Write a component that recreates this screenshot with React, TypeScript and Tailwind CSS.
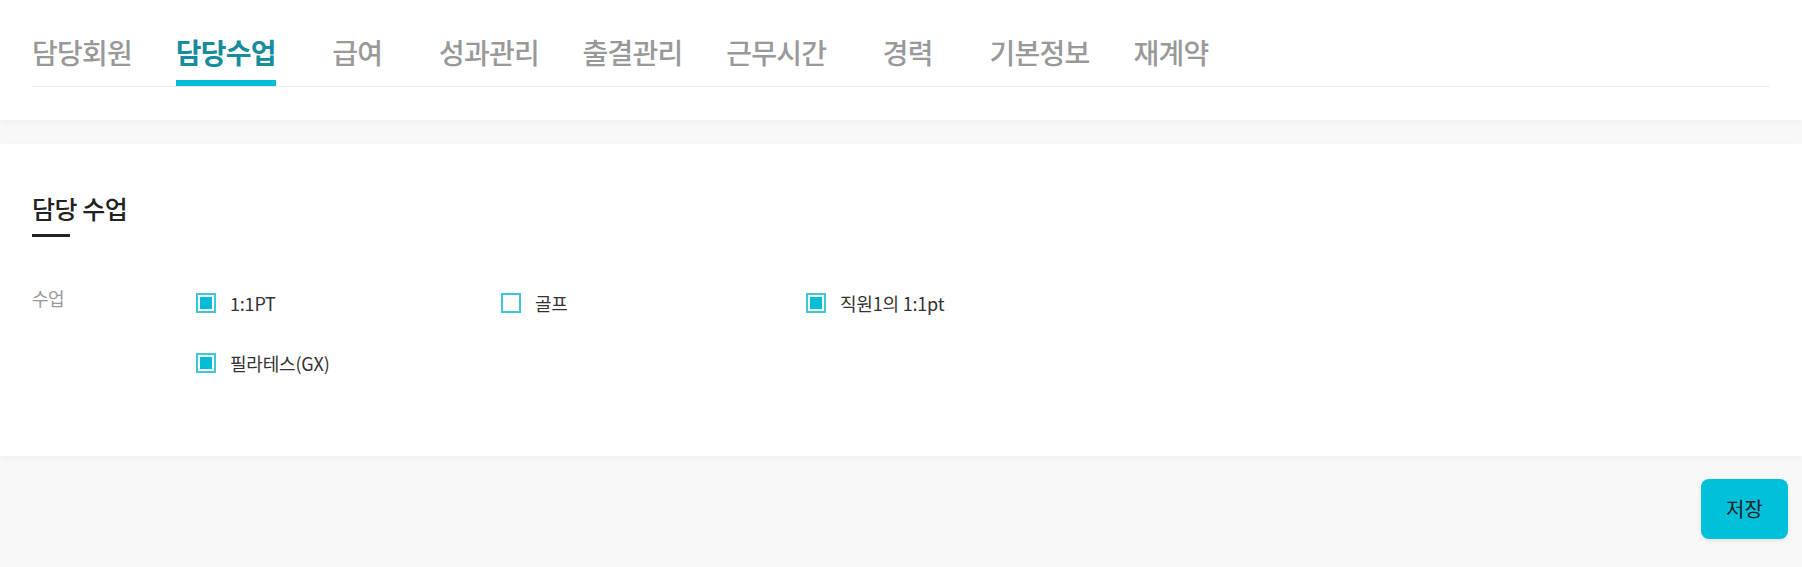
import React from "react";

const tabs = ["담당회원", "담당수업", "급여", "성과관리", "출결관리", "근무시간", "경력", "기본정보", "재계약"];

function Check({ checked, label }: { checked: boolean; label: string }) {
  return (
    <div className="flex items-center w-[305px] h-[20px]">
      <span className="w-[20px] h-[20px] border-2 border-[#3ec6da] bg-white p-[2px] flex">
        {checked && <span className="flex-1 bg-[#00bcd6]" />}
      </span>
      <span className="ml-[14px] text-[18px] tracking-[-0.2px] text-[#333] leading-none">{label}</span>
    </div>
  );
}

export default function App() {
  return (
    <div
      className="min-h-[567px] bg-[#f8f8f8]"
      style={{ fontFamily: '"Noto Sans CJK KR", "Noto Sans", sans-serif' }}
    >
      <header className="bg-white h-[120px] px-[32px] pt-[33px] shadow-[0_2px_6px_rgba(0,0,0,0.04)]">
        <nav className="flex gap-[43.6px] border-b border-[#ececec]">
          {tabs.map((t, i) => {
            const active = i === 1;
            return (
              <div key={t} className="flex flex-col min-w-[76px] items-center">
                <span
                  className={
                    "text-[28px] leading-[39px] tracking-[-0.75px] " +
                    (active ? "font-bold text-[#168c9c]" : "font-medium text-[#999]")
                  }
                >
                  {t}
                </span>
                <span className={"mt-[8px] h-[6px] self-stretch " + (active ? "bg-[#00bcd6]" : "")} />
              </div>
            );
          })}
        </nav>
      </header>

      <section className="mt-[24px] bg-white h-[312px] px-[32px] pt-[46px] shadow-[0_2px_6px_rgba(0,0,0,0.04)]">
        <h2 className="text-[25px] leading-[36px] tracking-[-0.5px] font-medium text-[#222]">담당 수업</h2>
        <div className="mt-[8px] w-[38px] h-[3px] bg-[#222]" />
        <div className="mt-[56px] flex">
          <div className="w-[164px] -mt-[4px] text-[18px] tracking-[-0.5px] text-[#999] leading-none">수업</div>
          <div className="flex flex-wrap w-[915px] gap-y-[40px]">
            <Check checked label="1:1PT" />
            <Check checked={false} label="골프" />
            <Check checked label="직원1의 1:1pt" />
            <Check checked label="필라테스(GX)" />
          </div>
        </div>
      </section>

      <div className="flex justify-end pt-[23px] pr-[14px]">
        <button className="w-[87px] h-[60px] rounded-[8px] bg-[#00c0da] text-[20px] text-[#222] shadow-[0_2px_4px_rgba(0,0,0,0.08)]">
          저장
        </button>
      </div>
    </div>
  );
}
